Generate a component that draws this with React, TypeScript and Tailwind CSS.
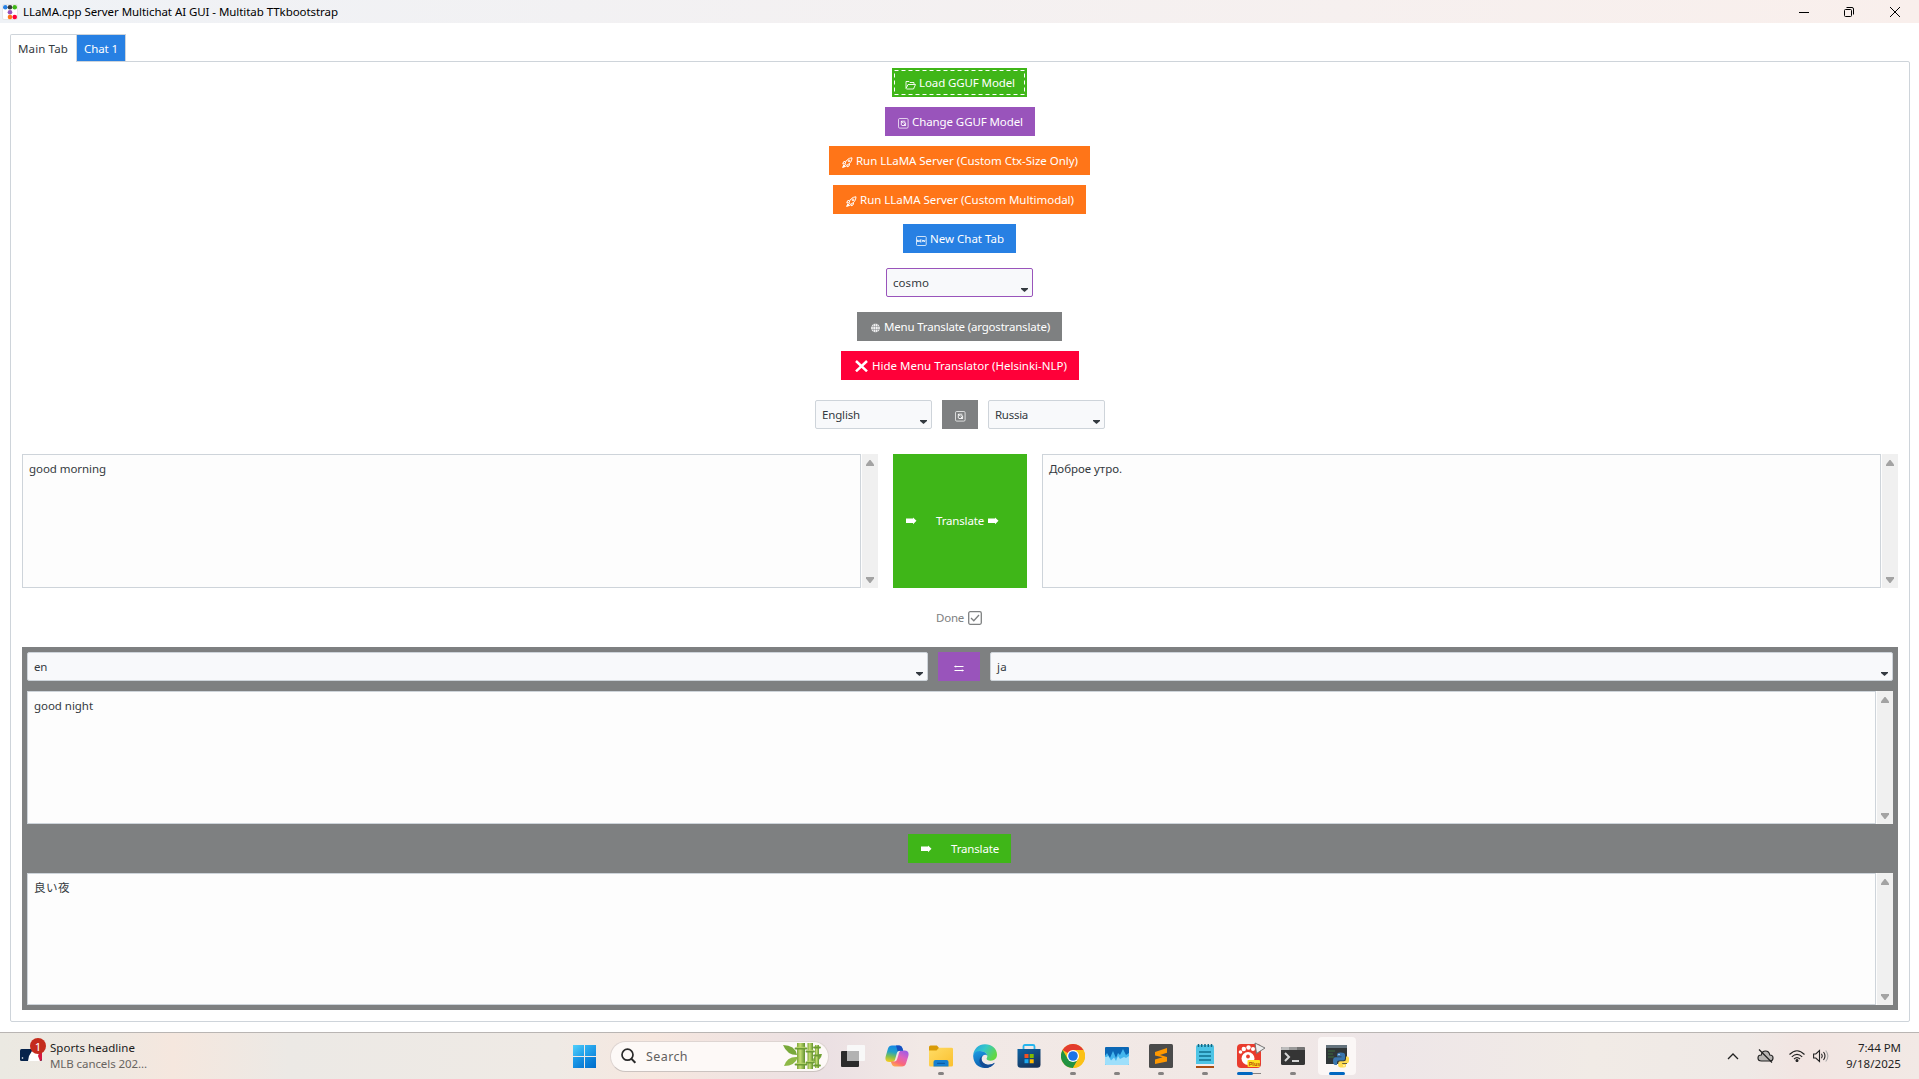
import { useLayoutEffect, useRef, useState, type ReactNode } from "react";

/** Single-line text tracked so that it occupies exactly `w` pixels. */
function Fit({ w, className = "", children }: { w: number; className?: string; children: string }) {
  const ref = useRef<HTMLSpanElement>(null);
  const [ls, setLs] = useState(0);
  useLayoutEffect(() => {
    const el = ref.current;
    if (el) setLs((w - el.getBoundingClientRect().width) / children.length);
  }, [w, children]);
  return (
    <span ref={ref} className={`inline-block shrink-0 whitespace-pre ${className}`} style={{ letterSpacing: ls }}>
      {children}
    </span>
  );
}

const Folder = () => (
  <svg width="11" height="10" viewBox="0 0 11 10" fill="none" stroke="white" strokeWidth="0.9" className="translate-y-[2px]">
    <path d="M1 8.5V1.5h3l1 1h4v2M1 8.5l2-4h7.5l-2 4.5H1.5" />
  </svg>
);
const Swap = () => (
  <svg width="11" height="11" viewBox="0 0 11 11" fill="none" stroke="white" strokeWidth="0.9" className="translate-y-[2px]">
    <rect x="0.5" y="0.5" width="9.6" height="9.6" rx="1.200" opacity="0.8" />
    <path d="M7.300 3.200H3.300V7M3 3l1.800 1.800M3.600 7.500h4V4.800H5.500M7.600 7.600L5.800 5.800" />
  </svg>
);
const Rocket = () => (
  <svg width="11" height="11" viewBox="0 0 11 11" fill="none" stroke="white" strokeWidth="1" className="translate-y-[2px]">
    <path d="M3 6.8C4 3 6.500 1 10 .8 10 4.200 8 6.800 4.600 8.300z" />
    <path d="M3.500 4.300L1.500 4.800.8 7l2-.3M5 8.200v1.600l2-.8.6-2.200" />
    <path d="M.6 10.400l1.300-2.600 1.700 1.600z" fill="white" />
    <circle cx="7" cy="3.800" r="0.900" />
  </svg>
);
const NewIcon = () => (
  <svg width="11" height="10" viewBox="0 0 11 10" fill="none" stroke="white" strokeWidth="0.9" className="translate-y-[2px]">
    <rect x="0.5" y="0.5" width="9.700" height="9" rx="1" opacity="0.85" />
    <path d="M1.500 6V3.800L3 6V3.800M5.500 3.900H4v2h1.500M4 4.900h1.300M6.300 3.800l.6 2.100.8-1.900.8 1.900.6-2.100" strokeWidth="0.8" />
  </svg>
);
const Globe = () => (
  <svg width="9" height="9" viewBox="0 0 9 9" className="mx-px translate-y-[1.500px]">
    <circle cx="4.500" cy="4.500" r="4.400" fill="#f3f3f3" />
    <path d="M0 3h9M0 6h9M4.500 0v9M2.700.5q-1.400 4 0 8M6.300.5q1.400 4 0 8" fill="none" stroke="#85878a" strokeWidth="0.5" />
  </svg>
);
const Cross = () => (
  <svg width="13" height="12" viewBox="0 0 13 12" fill="none" stroke="white" strokeWidth="2.500" className="ml-px mr-px">
    <path d="M1 1l11 10.300M12 1L1 11.300" />
  </svg>
);
const Arrow = () => (
  <svg width="11" height="8" viewBox="0 0 11 8" fill="white">
    <path d="M0 1.500h7V.5l3.500 3.300L7 7.200V6H0z" />
  </svg>
);

function Button({ className, icon, w, children }: { className: string; icon: ReactNode; w: number; children: string }) {
  return (
    <div className={`flex h-[29px] shrink-0 items-center pl-[13px] text-white ${className}`}>
      {icon}
      <Fit w={w} className="ml-[3px]">{children}</Fit>
    </div>
  );
}

function Combo({ className, w, children }: { className: string; w: number; children: string }) {
  return (
    <div className={`flex h-[29px] items-center justify-between rounded-[2px] border bg-[#f8f9fb] pl-[6px] ${className}`}>
      <Fit w={w}>{children}</Fit>
      <svg width="7" height="4" viewBox="0 0 7 4" className="mr-[4px] mt-[14px]" fill="#343a40">
        <path d="M0 0h7v1L3.500 4 0 1z" />
      </svg>
    </div>
  );
}

function TextBox({ className, w, children }: { className: string; w: number; children: string }) {
  return (
    <div className={`flex bg-[#fdfdfd] ${className}`}>
      <div className="flex-1 border border-[#ced4da] pl-[6px] pt-[5px]">
        <Fit w={w}>{children}</Fit>
      </div>
      <div className="ml-px flex w-4 flex-col items-center justify-between bg-[#f0f0f0] pb-[5px] pt-[6px]">
        <svg width="8" height="6" viewBox="0 0 8 6" fill="#a3a3a3"><path d="M0 6V4.500L3.500 0h1L8 4.500V6z" /></svg>
        <svg width="8" height="6" viewBox="0 0 8 6" fill="#a3a3a3"><path d="M0 0v1.500L3.500 6h1L8 1.500V0z" /></svg>
      </div>
    </div>
  );
}

function TaskButton({ children, state = "none" }: { children?: ReactNode; state?: "none" | "open" | "partial" | "active" }) {
  return (
    <div className={`relative mx-[3px] flex h-[38px] w-[38px] shrink-0 items-center justify-center rounded-[4px] ${state === "active" ? "bg-[#fbf7f6]" : ""}`}>
      <div className="-mt-px">{children}</div>
      {state === "open" && <div className="absolute bottom-0 left-4 h-[3px] w-[6px] rounded-full bg-[#858281]" />}
      {state === "active" && <div className="absolute bottom-0 left-[11px] h-[3px] w-4 rounded-full bg-[#0067c0]" />}
      {state === "partial" && (
        <div className="absolute bottom-0 left-[7px] flex items-center">
          <div className="h-[3px] w-4 rounded-full bg-[#0067c0]" />
          <div className="h-px w-2 bg-[#858281]" />
        </div>
      )}
    </div>
  );
}

const TaskView = () => (
  <svg width="24" height="24" viewBox="0 0 24 24" className="block">
    <rect x="0" y="7" width="18" height="16" rx="1" fill="#2b2b2b" />
    <rect x="6" y="1" width="18" height="16" rx="1" fill="#f8f8f8" />
    <path d="M6 7h12v10H7q-1 0-1-1z" fill="#b2b2b2" />
  </svg>
);
const Copilot = () => (
  <svg width="24" height="24" viewBox="0 0 24 24" className="block">
    <defs>
      <linearGradient id="cpA" x1="0.500" y1="0" x2="0.300" y2="1"><stop stopColor="#1586e8" /><stop offset=".4" stopColor="#21a2c8" /><stop offset=".7" stopColor="#84c04c" /><stop offset="1" stopColor="#f4cc20" /></linearGradient>
      <linearGradient id="cpB" x1="0.800" y1="0" x2="0.300" y2="1"><stop stopColor="#9b5be8" /><stop offset=".4" stopColor="#dd61bd" /><stop offset=".75" stopColor="#fa687a" /><stop offset="1" stopColor="#ffa350" /></linearGradient>
    </defs>
    <path d="M14 1.500q2.600 0 3.500 3l.7 2.300h-3.500q-2.200 0-2.800 2.200l-2 7q-.7 2-2.700 2H4.500Q-.8 18 .8 12l2.200-7.500q.9-3 4-3z" fill="url(#cpA)" />
    <path d="M10 22.500q-2.600 0-3.500-3l-.7-2h3.500q2.200 0 2.800-2.200l2-6.900q.7-2 2.700-2h2.700q5.300 0 3.700 6L21 19.500q-.9 3-4 3z" fill="url(#cpB)" />
    <path d="M11 1.500h3q2.600 0 3.500 3l.7 2.300h-3.500q-1.300 0-2 .8z" fill="#174fc1" />
  </svg>
);
const Explorer = () => (
  <svg width="24" height="24" viewBox="0 0 24 24" className="block">
    <defs><linearGradient id="ex" x1="0" y1="0" x2="1" y2="1"><stop stopColor="#ffdc65" /><stop offset="1" stopColor="#fbc02f" /></linearGradient></defs>
    <path d="M0 3q0-1.500 1.500-1.500h6.300L10 3.700V8H0z" fill="#d99b08" />
    <path d="M0 6.500h7.500L10 3.700h12.500Q24 3.700 24 5v16q0 1.500-1.500 1.500h-21Q0 22.500 0 21z" fill="url(#ex)" />
    <path d="M4.500 22.500V18q0-2 2-2h11q2 0 2 2v4.500z" fill="#1680d0" />
    <rect x="8" y="18.800" width="8" height="1.200" rx=".6" fill="#0b5ba6" />
  </svg>
);
const Edge = () => (
  <svg width="24" height="24" viewBox="0 0 24 24" className="block">
    <defs>
      <linearGradient id="eg" x1="0" y1="0" x2="1" y2=".5"><stop stopColor="#249fe5" /><stop offset=".5" stopColor="#36c8c8" /><stop offset="1" stopColor="#62d744" /></linearGradient>
      <linearGradient id="eb" x1="0" y1="0" x2="0.500" y2="1"><stop stopColor="#1c9de5" /><stop offset="1" stopColor="#0b59a9" /></linearGradient>
    </defs>
    <path d="M.2 11C.8 4.800 5.500.2 12 .2c7 0 12 4.700 12 10.300 0 4-2.800 6.200-6.200 6.200-3 0-4.600-1.200-4.200-2.200 1.400-1.600 1.200-5.700-3.500-6.700Q4 6.500.2 11z" fill="url(#eg)" />
    <path d="M.1 11.800Q1 7 7 7q6 .3 7.400 4.700-2-1.700-4.300-.3c-3 2-1.800 7.800 3.400 9 3 .7 5.700 0 8.300-1.700Q18.500 24 12 24 1 23.500.1 11.800z" fill="url(#eb)" />
    <path d="M10.100 11.400c-3 2-1.800 7.800 3.400 9 3 .7 5.700 0 8.300-1.700-3 4.600-7.500 5.400-10.500 5.100-6.500-3-6.200-10.600-1.200-12.400z" fill="#144b94" />
  </svg>
);
const Store = () => (
  <svg width="24" height="24" viewBox="0 0 24 24" className="block">
    <defs><linearGradient id="st" x1="0" y1="0" x2="0.600" y2="1"><stop stopColor="#0c63a5" /><stop offset="1" stopColor="#173258" /></linearGradient></defs>
    <path d="M6.500 6V2.500Q6.500 1 8 1h8q1.500 0 1.500 1.500V6" fill="none" stroke="#26b5ed" strokeWidth="1.800" />
    <path d="M.5 5h23v15.500q0 3.300-3.300 3.300H3.800Q.5 23.800.5 20.500z" fill="url(#st)" />
    <path d="M7.500 10h4v4h-4z" fill="#f25022" /><path d="M12.700 10h4v4h-4z" fill="#7fba00" /><path d="M7.500 15.200h4v4h-4z" fill="#1ba8ef" /><path d="M12.700 15.200h4v4h-4z" fill="#ffb900" />
  </svg>
);
const Chrome = () => (
  <svg width="24" height="24" viewBox="0 0 24 24" className="block">
    <circle cx="12" cy="12" r="12" fill="#fbc116" />
    <path d="M12 12L1.600 6A12 12 0 0 1 22.400 6z" fill="#e33b2e" />
    <path d="M1.600 6A12 12 0 0 0 12 24l5.200-9-10.400 0z" fill="#229342" />
    <path d="M12 6h10.400A12 12 0 0 1 12 24l5.200-9z" fill="#fbc116" />
    <circle cx="12" cy="12" r="6" fill="white" /><circle cx="12" cy="12" r="4.800" fill="#1a73e8" />
  </svg>
);
const Monitor = () => (
  <svg width="24" height="24" viewBox="0 0 24 24" className="block">
    <rect x="0" y="3" width="24" height="18" rx="1" fill="#0b67b5" />
    <path d="M0 12l2-3 3 5 3-7 3 7 2-5 2 2 3-6 3 6 3-2v11q0 1-1 1H1q-1 0-1-1z" fill="#44b6ed" />
    <path d="M0 13h2l1-1.500 3 5 3-3 2 3.500 2-5 2 3 4-2 2 1 3-2v8q0 1-1 1H1q-1 0-1-1z" fill="#9edffb" />
  </svg>
);
const Sublime = () => (
  <svg width="24" height="24" viewBox="0 0 24 24" className="block">
    <rect width="24" height="24" rx="1.500" fill="#4b4b4b" />
    <path d="M6 8l12-4v4.700L11 11l7 2v4.500L6 20v-4.500l7.500-2.200L6 11.500z" fill="#ff9800" />
  </svg>
);
const Notepad = () => (
  <svg width="24" height="24" viewBox="0 0 24 24" className="block">
    <path d="M3 21h18v3H3z" fill="#ac4d12" /><rect x="3" y="1" width="18" height="21" rx="1.500" fill="#4ec4e5" />
    <path d="M3 20h18v2H3z" fill="#f3eded" />
    <path d="M6 8h12M6 12h12M6 16h12" stroke="#10708f" strokeWidth="1.400" />
    <path d="M5.500 0v3M8.700 0v3M12 0v3M15.300 0v3M18.500 0v3" stroke="#126783" strokeWidth="1.500" />
  </svg>
);
const Gom = () => (
  <svg width="30" height="26" viewBox="0 0 30 26" className="-mt-px ml-[5px] block">
    <rect x="0" y="2" width="24" height="24" rx="4" fill="#e93b2d" />
    <circle cx="11" cy="16.500" r="6.500" fill="white" /><circle cx="3.500" cy="10" r="1.800" fill="white" /><circle cx="6.800" cy="7" r="2.200" fill="white" /><circle cx="11.500" cy="5.500" r="2.200" fill="white" /><circle cx="16" cy="7" r="2" fill="white" />
    <circle cx="11" cy="14.500" r="1.900" fill="#e93b2d" />
    <path d="M18 1l10 5-8.500 5.500z" fill="#eee" stroke="#777" strokeWidth="1" />
    <rect x="10.500" y="18" width="12.500" height="7" rx="1" fill="#ffdf22" />
    <text x="11.700" y="23.600" fontSize="5.500" fontWeight="700" fontFamily="Liberation Sans, sans-serif" fill="#b84c08">Plus</text>
  </svg>
);
const Terminal = () => (
  <svg width="24" height="24" viewBox="0 0 24 24" className="block">
    <rect y="3" width="24" height="18" rx="1.500" fill="#353535" /><path d="M0 6V4.500Q0 3 1.500 3H8v3z" fill="#bdbdbd" /><path d="M8 3h8v3H8z" fill="#9a9a9a" /><path d="M16 3h6.500Q24 3 24 4.500V6h-8z" fill="#757575" />
    <path d="M4 9l4 4-4 4" fill="none" stroke="#d6d6d6" strokeWidth="2" /><path d="M11 17h7" stroke="white" strokeWidth="1.600" />
  </svg>
);
const PythonApp = () => (
  <svg width="24" height="24" viewBox="0 0 24 24" className="block">
    <path d="M1 1h21v19H1z" fill="#303638" /><path d="M1 1h21v3H1z" fill="#65737d" /><path d="M3 7h7M3 10h5M3 13h6" stroke="#3b6b3c" strokeWidth="1.200" />
    <path d="M15.500 8.500q-3.500 0-3.500 2v2h4.500v.8h-6q-2.500.2-2.500 4 0 3.600 2.400 3.700H12v-2.500q0-2 2-2h4q2 0 2-2v-4q0-2-4.500-2z" fill="#3a76ae" />
    <path d="M21 12.500V15q0 2.300-2.200 2.300h-3.600q-2 0-2 2v2.500q0 1.800 4 1.800t3.800-1.800V20h-3.800v-.8h5q2-.2 2-3.500t-2-3.200z" fill="#ffdc52" />
    <circle cx="14" cy="10.500" r=".7" fill="white" /><circle cx="19" cy="21.700" r=".7" fill="white" />
  </svg>
);
const Bamboo = () => (
  <svg width="40" height="26" viewBox="0 0 40 26" className="block">
    <defs><linearGradient id="bm"><stop stopColor="#7fa53b" /><stop offset=".4" stopColor="#c3dd72" /><stop offset="1" stopColor="#62912f" /></linearGradient></defs>
    <path d="M0 2q12 0 14 10Q4 12 0 2z" fill="#79a93a" /><path d="M1 23q3-10 14-9-3 9-14 9z" fill="#8eb846" /><path d="M39 11q-9-1-9 8 8-1 9-8z" fill="#79a93a" />
    <rect x="14" y="0" width="8" height="26" fill="url(#bm)" /><rect x="24.500" y="0" width="5.500" height="26" fill="url(#bm)" /><rect x="32" y="2" width="4" height="23" fill="url(#bm)" />
    <path d="M12.500 5.500h11M12.500 21.500h11M23.500 8.500h7.500M23.500 19.500h7.500M31 4.500h6M31 12.500h6M31 22.500h6" stroke="#6d9b35" strokeWidth="1.800" strokeLinecap="round" />
    <path d="M13 4.300h10M13 20.300h10M24 7.300h6.500M24 18.300h6.500" stroke="#bcd770" strokeWidth="1" />
  </svg>
);

export default function App() {
  return (
    <div className="flex h-[1079px] w-[1919px] flex-col overflow-hidden bg-white font-['Noto_Sans','Noto_Sans_CJK_JP',sans-serif] text-[11.5px] leading-[17px] text-[#343a40]">
      <header className="flex h-[23px] shrink-0 items-center bg-gradient-to-r from-[#eff2f6] to-[#f9efec] text-black">
        <svg width="16" height="16" viewBox="0 0 16 16" className="ml-[2px] mr-[5px]">
          <rect x=".5" y=".5" width="15" height="15" rx="1.500" fill="white" stroke="#ddd" strokeWidth=".7" />
          <circle cx="3.300" cy="3.300" r="2.300" fill="#2780e3" /><circle cx="8" cy="3.300" r="2.300" fill="#373a3c" /><circle cx="12.700" cy="3.300" r="2.300" fill="#3fb618" />
          <circle cx="8" cy="8.200" r="2.300" fill="#9954bb" /><circle cx="8" cy="13" r="2.300" fill="#ff7518" /><circle cx="12.700" cy="13" r="2.300" fill="#ff0039" />
        </svg>
        <Fit w={315}>LLaMA.cpp Server Multichat AI GUI - Multitab TTkbootstrap</Fit>
        <div className="ml-auto mr-[19px] flex items-center gap-[35px]">
          <svg width="10" height="10" viewBox="0 0 10 10"><path d="M0 5.500h10" stroke="black" /></svg>
          <svg width="10" height="10" viewBox="0 0 10 10" fill="none" stroke="black"><rect x=".5" y="2.500" width="7" height="7" rx="1" /><path d="M2.500.5H8Q9.500.5 9.500 2v5.500" /></svg>
          <svg width="10" height="10" viewBox="0 0 10 10" stroke="black" className="ml-px"><path d="M0 0l10 10M10 0L0 10" /></svg>
        </div>
      </header>

      <nav className="relative z-10 ml-[10px] mt-[11px] flex h-[28px] shrink-0 items-start">
        <div className="flex h-[28px] w-[67px] items-center rounded-tl-[2px] border border-b-0 border-[#ced4da] bg-white pl-[7px]"><Fit w={50}>Main Tab</Fit></div>
        <div className="flex h-[27px] w-[49px] items-center border-r border-t border-[#ced4da] bg-[#2780e3] pl-[7px] pt-px text-white"><Fit w={34}>Chat 1</Fit></div>
      </nav>

      <main className="-mt-px ml-[10px] flex h-[961px] w-[1900px] shrink-0 flex-col items-center rounded-[2px] border border-[#ced4da] px-[11px]">
        <div className="mt-[6px] flex flex-col items-center gap-[10px]">
          <div className="relative mr-px">
            <Button className="w-[135px] bg-[#3fb618]" icon={<Folder />} w={96}>Load GGUF Model</Button>
            <svg width="131" height="25" viewBox="0 0 131 25" className="absolute left-[2px] top-[2px]">
              <rect x=".5" y=".5" width="130" height="24" fill="none" stroke="white" strokeDasharray="4 3" />
            </svg>
          </div>
          <Button className="w-[150px] bg-[#9954bb]" icon={<Swap />} w={111}>Change GGUF Model</Button>
          <Button className="mr-px w-[261px] bg-[#ff7518]" icon={<Rocket />} w={222}>Run LLaMA Server (Custom Ctx-Size Only)</Button>
          <Button className="mr-px w-[253px] bg-[#ff7518]" icon={<Rocket />} w={214}>Run LLaMA Server (Custom Multimodal)</Button>
          <Button className="mr-px w-[113px] bg-[#2780e3]" icon={<NewIcon />} w={74}>New Chat Tab</Button>
        </div>
        <Combo className="my-[15px] mr-px w-[147px] border-[#9954bb]" w={36}>cosmo</Combo>
        <Button className="mr-px w-[205px] bg-[#7e8081]" icon={<Globe />} w={166}>Menu Translate (argostranslate)</Button>
        <Button className="mt-[10px] w-[238px] bg-[#ff0039]" icon={<Cross />} w={195}>Hide Menu Translator (Helsinki-NLP)</Button>
        <div className="mt-[20px] flex gap-[10px]">
          <Combo className="w-[117px] border-[#ced4da]" w={38}>English</Combo>
          <div className="flex h-[29px] w-[36px] items-center justify-center bg-[#7e8081]"><Swap /></div>
          <Combo className="w-[117px] border-[#ced4da]" w={33}>Russia</Combo>
        </div>

        <div className="mt-[25px] flex h-[134px] w-full">
          <TextBox className="w-[856px]" w={77}>good morning</TextBox>
          <div className="mx-[15px] flex w-[134px] items-center bg-[#3fb618] pl-[13px] text-white">
            <Arrow />
            <Fit w={48} className="mb-[2px] ml-[19px] mr-[4px]">Translate</Fit>
            <Arrow />
          </div>
          <TextBox className="flex-1" w={73}>Доброе утро.</TextBox>
        </div>

        <div className="mt-[21px] flex h-[18px] items-center gap-[4px] pr-[2px] text-[#7e8081]">
          <Fit w={28} className="mb-[2px]">Done</Fit>
          <svg width="14" height="14" viewBox="0 0 14 14" fill="none" stroke="#7e8081" strokeWidth="1.300" className="mb-px">
            <rect x=".7" y=".7" width="12.600" height="12.600" rx="1.500" /><path d="M3 7l2.800 2.800L11 4" />
          </svg>
        </div>

        <section className="mt-[20px] flex h-[363px] w-full flex-col items-center bg-[#7e8081] px-[5px] pt-[5px]">
          <div className="flex w-full gap-[10px]">
            <Combo className="w-[901px] border-[#ced4da]" w={13}>en</Combo>
            <div className="flex h-[29px] w-[42px] items-center justify-center bg-[#9954bb]">
              <svg width="10" height="7" viewBox="0 0 10 7" fill="none" stroke="white" className="ml-[-1px] mt-[3px]"><path d="M.5 1.500H9.500M.5 5.500H9.500" /><path d="M.5 1.500L2.300.3M.5 1.500l1.800 1.200M9.500 5.500L7.700 4.300M9.500 5.500l-1.800 1.200" strokeWidth=".6" opacity=".7" /></svg>
            </div>
            <Combo className="flex-1 border-[#ced4da]" w={10}>ja</Combo>
          </div>
          <TextBox className="mt-[10px] h-[133px] w-full" w={59}>good night</TextBox>
          <div className="mr-px mt-[10px] flex h-[29px] w-[103px] shrink-0 items-center bg-[#3fb618] pl-[13px] text-white">
            <Arrow />
            <Fit w={48} className="ml-[19px]">Translate</Fit>
          </div>
          <TextBox className="mt-[10px] h-[132px] w-full" w={36}>良い夜</TextBox>
        </section>
      </main>

      <footer className="mt-[10px] flex h-[47px] shrink-0 items-center border-t border-[#b9b5b3] bg-[linear-gradient(90deg,#ebe9e2_0%,#efe8e1_6%,#f5e7de_9%,#ece9e5_15%,#efeae5_29%,#f6e7df_34%,#ebe0e3_43%,#f2e9e6_48%,#f1e8e5_65%,#eee6e8_72%,#f1ebe6_83%,#efe9e6_91%,#f2e5e2_94%,#f2e9e5_100%)]">
        <div className="relative ml-[20px] h-[30px] w-[30px]">
          <svg width="22" height="12" viewBox="0 0 22 12" className="mt-[8px]"><rect width="22" height="12" rx="1.500" fill="#06234b" /><path d="M12 0h8q2 0 2 2v8q0 2-2 2h-2z" fill="#d5173f" /><path d="M8 12l1-5 3-5 4-2 3 4-1 3 2 5z" fill="white" /><circle cx="2.500" cy="9" r=".8" fill="white" /></svg>
          <div className="absolute -top-[3px] left-[10px] flex h-4 w-4 items-center justify-center rounded-full bg-[#c42b1c] text-white">1</div>
        </div>
        <div className="flex w-[110px] flex-col items-start leading-[16px] text-[#1b1b1b]">
          <Fit w={85}>Sports headline</Fit>
          <Fit w={97} className="text-[#686460]">MLB cancels 202...</Fit>
        </div>
        <div className="ml-[413px] grid h-[23px] w-[23px] grid-cols-2 gap-px">
          <div className="bg-gradient-to-br from-[#50d0fb] to-[#1a9be8]" /><div className="bg-gradient-to-br from-[#32b4f3] to-[#138ade]" />
          <div className="bg-gradient-to-br from-[#22a3ee] to-[#0879d3]" /><div className="bg-gradient-to-br from-[#158fe2] to-[#006ccb]" />
        </div>
        <div className="ml-[14px] flex h-[31px] w-[219px] items-center rounded-full border border-[#ded5d2] border-b-[#cbc3c0] bg-[#fdf9f7]">
          <svg width="15" height="16" viewBox="0 0 15 16" className="ml-[10px]" fill="none" stroke="#292929" strokeWidth="1.700"><circle cx="6.500" cy="6.700" r="5.500" /><path d="M10.300 10.600l4 4.200" strokeWidth="2" /></svg>
          <Fit w={42} className="ml-[10px] text-[12.5px] text-[#62605e]">Search</Fit>
          <div className="ml-auto mr-[5px]"><Bamboo /></div>
        </div>
        <div className="ml-[2px] flex">
          <TaskButton><TaskView /></TaskButton>
          <TaskButton><Copilot /></TaskButton>
          <TaskButton state="open"><Explorer /></TaskButton>
          <TaskButton><Edge /></TaskButton>
          <TaskButton><Store /></TaskButton>
          <TaskButton state="open"><Chrome /></TaskButton>
          <TaskButton state="open"><Monitor /></TaskButton>
          <TaskButton state="open"><Sublime /></TaskButton>
          <TaskButton state="open"><Notepad /></TaskButton>
          <TaskButton state="partial"><Gom /></TaskButton>
          <TaskButton state="open"><Terminal /></TaskButton>
          <TaskButton state="active"><PythonApp /></TaskButton>
        </div>
        <div className="ml-auto mr-[18px] flex items-center text-[#1f1f1f]">
          <svg width="12" height="7" viewBox="0 0 12 7" fill="none" stroke="#222" strokeWidth="1.300" className="mr-[18px]"><path d="M1 6l5-5 5 5" /></svg>
          <svg width="17" height="14" viewBox="0 0 17 14" className="mr-[15px]"><path d="M4.500 12Q1 12 1 9t3.300-3Q5 2 8.500 2t4.300 4Q16 6 16 9t-3.200 3z" fill="#b7b4b2" stroke="#222" strokeWidth="1.200" /><path d="M2 .5l13 13" stroke="#222" strokeWidth="1.300" /></svg>
          <svg width="16" height="12" viewBox="0 0 16 12" fill="none" stroke="#222" strokeWidth="1.100" className="mr-[8px]"><path d="M.5 4.500q7.500-7.500 15 0M2.800 6.800q5.200-5 10.400 0M5 9q3-2.800 6 0" /><circle cx="8" cy="10.500" r="1" fill="#222" /></svg>
          <svg width="16" height="14" viewBox="0 0 16 14" fill="none" stroke="#222" strokeWidth="1.100" className="mr-[16px]"><path d="M.6 5h2.200L6.500 1.500v11L2.800 9H.6zM8.500 4.800q1.600 2.200 0 4.400M10.500 3q3 4 0 8" /><path d="M12.700 1.500q4.400 5.500 0 11" stroke="#aaa" /></svg>
          <div className="flex w-[56px] flex-col items-end leading-[16px]">
            <Fit w={43}>7:44 PM</Fit>
            <Fit w={55}>9/18/2025</Fit>
          </div>
        </div>
      </footer>
    </div>
  );
}
